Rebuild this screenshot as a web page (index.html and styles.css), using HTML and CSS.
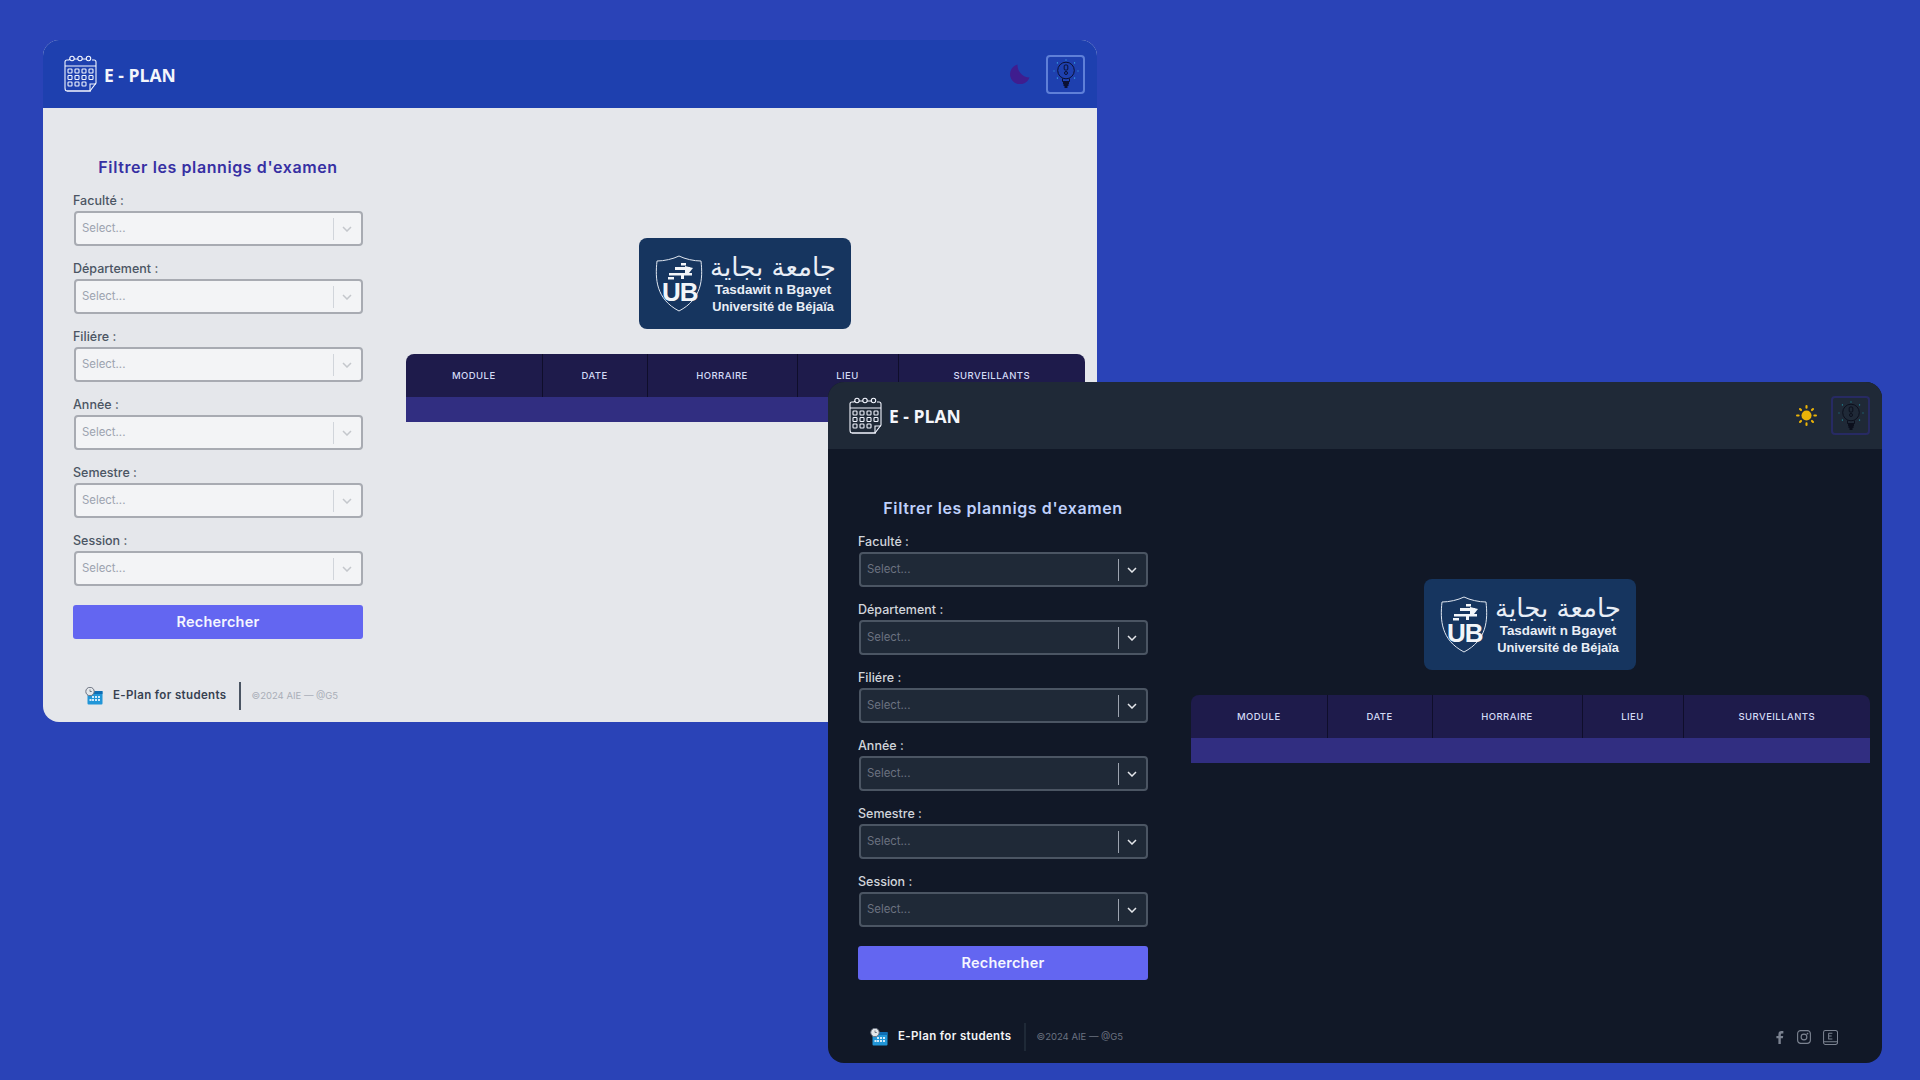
FILE: index.html
```html
<!DOCTYPE html>
<html lang="fr">
<head>
<meta charset="utf-8">
<title>E-Plan</title>
<link rel="stylesheet" href="styles.css">
</head>
<body>
<svg class="defs" aria-hidden="true">
  <symbol id="cal" viewBox="0 0 33 38">
    <g fill="none" stroke="currentColor" stroke-width="1.100">
      <path d="M5 5H3Q1 5 1 7V33M28 5h2q2 0 2 2v21l-6 8H3"/>
      <path d="M1 11H32M1 33q0 3 2 3h24M26 36v-7h6"/>
      <path d="M10 4h4M18 4h4.500M5 5l1-1"/>
      <circle cx="8" cy="3.500" r="2.200"/><circle cx="16" cy="3.500" r="2.200"/><circle cx="24.500" cy="3.500" r="2.200"/>
      <rect x="4" y="14" width="4" height="4" rx=".8"/><rect x="11" y="14" width="4" height="4" rx=".8"/><rect x="18" y="14" width="4" height="4" rx=".8"/><rect x="25" y="14" width="4" height="4" rx=".8"/>
      <rect x="4" y="20.500" width="4" height="4" rx=".8"/><rect x="11" y="20.500" width="4" height="4" rx=".8"/><rect x="18" y="20.500" width="4" height="4" rx=".8"/><rect x="25" y="20.500" width="4" height="4" rx=".8"/>
      <rect x="4" y="27" width="4" height="4" rx=".8"/><rect x="11" y="27" width="4" height="4" rx=".8"/><rect x="18" y="27" width="4" height="4" rx=".8"/>
    </g>
  </symbol>
  <symbol id="moon" viewBox="0 0 20 20">
    <path fill="currentColor" d="M7.500 .5A10 10 0 1 0 19.500 13.500 12.500 12.500 0 0 1 7.500 .5Z"/>
  </symbol>
  <symbol id="sun" viewBox="0 0 20 20">
    <circle cx="10" cy="10" r="4.800" fill="currentColor"/>
    <g stroke="currentColor" stroke-width="2" stroke-linecap="round">
      <path d="M10 1v1.500M10 17.500V19M1 10h1.500M17.500 10H19M3.800 3.800l1 1M15.200 15.200l1 1M3.800 16.200l1-1M15.200 4.800l1-1"/>
    </g>
  </symbol>
  <symbol id="bulb" viewBox="0 0 26 30">
    <g fill="none" stroke="currentColor" stroke-width="1">
      <circle cx="13" cy="11.500" r="8.300"/>
      <path d="M9.500 19.500v3h7v-3"/>
      <rect x="11.200" y="6" width="3.600" height="5" rx="1"/>
      <circle cx="13" cy="14" r="1.500"/>
    </g>
    <path stroke="currentColor" stroke-width="1.800" d="M10 24h6M10.500 26h5M11.500 28h3"/>
    <g class="ray" fill="none" stroke-width="1.200">
      <path d="M13 .5v1M4 3.500l.8.800M22 3.500l-.8.800M.5 12h1M24.500 12h1M4 19.500l.8-.8M22 19.500l-.8-.8"/>
    </g>
  </symbol>
  <symbol id="mini" viewBox="0 0 18 18">
    <rect x="2.500" y="4" width="15" height="13.500" rx="1" fill="#2196d8"/>
    <rect x="2.500" y="4" width="15" height="3" fill="#0f6db3"/>
    <g fill="#cfe9fa"><rect x="7" y="9" width="2" height="2"/><rect x="10" y="9" width="2" height="2"/><rect x="13" y="9" width="2" height="2"/><rect x="4.500" y="12" width="2" height="2"/><rect x="7" y="12" width="2" height="2"/><rect x="10" y="12" width="2" height="2"/><rect x="13" y="12" width="2" height="2"/></g>
    <circle cx="5" cy="4.500" r="4.200" fill="#e4e7ea" stroke="#6b7280"/>
    <path d="M5 2.500v2h1.800" fill="none" stroke="#4b5563" stroke-width=".7"/>
  </symbol>
  <symbol id="chev" viewBox="0 0 10 6">
    <path d="M1 1l4 4 4-4" fill="none" stroke="currentColor" stroke-width="1.500"/>
  </symbol>
  <symbol id="fb" viewBox="0 0 10 16">
    <path fill="currentColor" d="M3 16V9H.5V6H3V4q0-4 4-4h2.200v3H7.500Q6 3 6 4.500V6h3l-.5 3H6v7Z"/>
  </symbol>
  <symbol id="ig" viewBox="0 0 16 16">
    <g fill="none" stroke="currentColor" stroke-width="1.300"><rect x=".7" y=".7" width="14.600" height="14.600" rx="3.500"/><circle cx="8" cy="8" r="3.300"/></g>
    <circle cx="12" cy="4" r="1" fill="currentColor"/>
  </symbol>
  <symbol id="bk" viewBox="0 0 16 16">
    <g fill="none" stroke="currentColor" stroke-width="1.100"><path d="M2.500.6h11a2 2 0 0 1 2 2v10.500a2.200 2.200 0 0 1-2.200 2.300H2.700A2.200 2.200 0 0 1 .6 13V2.500A2 2 0 0 1 2.500.6Z"/><path d="M.8 12.500h14.500M6 3.500h4M6 3.500v6h4M6 6.500h3.300"/></g>
  </symbol>
  <symbol id="shield" viewBox="0 0 48 57">
    <path d="M24 1C18 4 9 6 2 6c-2 18-1 38 22 50C47 44 48 24 46 6c-7 0-16-2-22-5Z" fill="none" stroke="#dfe6f0" stroke-width="1"/>
    <g fill="#f2f5f9">
      <rect x="26" y="8" width="5" height="2.500"/><rect x="20" y="12" width="15" height="3"/><path d="M30 11l8 2-4 5h-4Z"/>
      <rect x="14" y="18" width="23" height="2.500"/><rect x="26" y="20" width="3" height="4"/><rect x="13" y="22" width="6" height="2.500"/>
    </g>
  </symbol>
</svg>

<section class="win win-light">
  <header class="bar">
    <div class="brand"><svg class="ico-cal"><use href="#cal"/></svg><span class="brand-name">E - PLAN</span></div>
    <div class="bar-tools">
      <svg class="ico-moon"><use href="#moon"/></svg>
      <span class="bulb-btn"><svg class="ico-bulb"><use href="#bulb"/></svg></span>
    </div>
  </header>
  <div class="main">
    <form class="filters">
      <h2 class="filters-title">Filtrer les plannigs d'examen</h2>
      <div class="fields">
        <div class="field"><span class="field-label">Faculté :</span><div class="select"><span class="ph">Select...</span><i class="sep"></i><svg class="chev"><use href="#chev"/></svg></div></div>
        <div class="field"><span class="field-label">Département :</span><div class="select"><span class="ph">Select...</span><i class="sep"></i><svg class="chev"><use href="#chev"/></svg></div></div>
        <div class="field"><span class="field-label">Filiére :</span><div class="select"><span class="ph">Select...</span><i class="sep"></i><svg class="chev"><use href="#chev"/></svg></div></div>
        <div class="field"><span class="field-label">Année :</span><div class="select"><span class="ph">Select...</span><i class="sep"></i><svg class="chev"><use href="#chev"/></svg></div></div>
        <div class="field"><span class="field-label">Semestre :</span><div class="select"><span class="ph">Select...</span><i class="sep"></i><svg class="chev"><use href="#chev"/></svg></div></div>
        <div class="field"><span class="field-label">Session :</span><div class="select"><span class="ph">Select...</span><i class="sep"></i><svg class="chev"><use href="#chev"/></svg></div></div>
      </div>
      <button class="search" type="button">Rechercher</button>
    </form>
    <div class="results">
      <div class="logo">
        <div class="shield"><svg class="shield-svg"><use href="#shield"/></svg><span class="shield-ub">UB</span></div>
        <div class="logo-text"><span class="logo-ar" dir="rtl" lang="ar">جامعة بجاية</span><span class="logo-l1">Tasdawit n Bgayet</span><span class="logo-l2">Université de Béjaïa</span></div>
      </div>
      <table class="plan">
        <colgroup><col class="c1"><col class="c2"><col class="c3"><col class="c4"><col class="c5"></colgroup>
        <thead><tr><th>MODULE</th><th>DATE</th><th>HORRAIRE</th><th>LIEU</th><th>SURVEILLANTS</th></tr></thead>
        <tbody><tr><td colspan="5"></td></tr></tbody>
      </table>
    </div>
  </div>
  <footer class="foot">
    <div class="foot-left">
      <svg class="ico-mini"><use href="#mini"/></svg>
      <span class="foot-name">E-Plan for students</span>
      <i class="foot-div"></i>
      <span class="foot-copy">©2024 AIE — @G5</span>
    </div>
    <div class="socials"><svg class="s-fb"><use href="#fb"/></svg><svg class="s-ig"><use href="#ig"/></svg><svg class="s-bk"><use href="#bk"/></svg></div>
  </footer>
</section>

<section class="win win-dark">
  <header class="bar">
    <div class="brand"><svg class="ico-cal"><use href="#cal"/></svg><span class="brand-name">E - PLAN</span></div>
    <div class="bar-tools">
      <svg class="ico-sun"><use href="#sun"/></svg>
      <span class="bulb-btn"><svg class="ico-bulb"><use href="#bulb"/></svg></span>
    </div>
  </header>
  <div class="main">
    <form class="filters">
      <h2 class="filters-title">Filtrer les plannigs d'examen</h2>
      <div class="fields">
        <div class="field"><span class="field-label">Faculté :</span><div class="select"><span class="ph">Select...</span><i class="sep"></i><svg class="chev"><use href="#chev"/></svg></div></div>
        <div class="field"><span class="field-label">Département :</span><div class="select"><span class="ph">Select...</span><i class="sep"></i><svg class="chev"><use href="#chev"/></svg></div></div>
        <div class="field"><span class="field-label">Filiére :</span><div class="select"><span class="ph">Select...</span><i class="sep"></i><svg class="chev"><use href="#chev"/></svg></div></div>
        <div class="field"><span class="field-label">Année :</span><div class="select"><span class="ph">Select...</span><i class="sep"></i><svg class="chev"><use href="#chev"/></svg></div></div>
        <div class="field"><span class="field-label">Semestre :</span><div class="select"><span class="ph">Select...</span><i class="sep"></i><svg class="chev"><use href="#chev"/></svg></div></div>
        <div class="field"><span class="field-label">Session :</span><div class="select"><span class="ph">Select...</span><i class="sep"></i><svg class="chev"><use href="#chev"/></svg></div></div>
      </div>
      <button class="search" type="button">Rechercher</button>
    </form>
    <div class="results">
      <div class="logo">
        <div class="shield"><svg class="shield-svg"><use href="#shield"/></svg><span class="shield-ub">UB</span></div>
        <div class="logo-text"><span class="logo-ar" dir="rtl" lang="ar">جامعة بجاية</span><span class="logo-l1">Tasdawit n Bgayet</span><span class="logo-l2">Université de Béjaïa</span></div>
      </div>
      <table class="plan">
        <colgroup><col class="c1"><col class="c2"><col class="c3"><col class="c4"><col class="c5"></colgroup>
        <thead><tr><th>MODULE</th><th>DATE</th><th>HORRAIRE</th><th>LIEU</th><th>SURVEILLANTS</th></tr></thead>
        <tbody><tr><td colspan="5"></td></tr></tbody>
      </table>
    </div>
  </div>
  <footer class="foot">
    <div class="foot-left">
      <svg class="ico-mini"><use href="#mini"/></svg>
      <span class="foot-name">E-Plan for students</span>
      <i class="foot-div"></i>
      <span class="foot-copy">©2024 AIE — @G5</span>
    </div>
    <div class="socials"><svg class="s-fb"><use href="#fb"/></svg><svg class="s-ig"><use href="#ig"/></svg><svg class="s-bk"><use href="#bk"/></svg></div>
  </footer>
</section>
</body>
</html>
```

FILE: styles.css
```css
* { box-sizing: border-box; }
html, body { margin: 0; height: 100%; }
body {
  position: relative;
  width: 1920px;
  height: 1080px;
  overflow: hidden;
  background: #2a43b7;
  font-family: Inter, "Liberation Sans", sans-serif;
}
.defs { position: absolute; width: 0; height: 0; }

/* Windows float on a free canvas */
.win {
  position: absolute;
  width: 1054px;
  display: flex;
  flex-direction: column;
  border-radius: 16px;
  overflow: hidden;
}
.win-light {
  left: 43px; top: 40px; height: 682px;
  --bar-h: 68px;
  --body: #e5e7eb; --bar: #1e40af; --title: #3730a3; --label: #4b5563;
  --sel: #f3f4f6; --sel-bd: #a8abb2; --ph: #9ca3af; --sep: #d1d5db; --chev: #c4c7cc;
  --name: #374151; --div: #4b5563; --copy: #a9aeb8; --moon: #3f1d8f;
  --bulb-bd: #5f80d8; --bulb: #0b1033; --ray: #38a9e8; --social: #6b7280;
}
.win-dark {
  left: 828px; top: 382px; height: 681px;
  --bar-h: 67px;
  --body: #111827; --bar: #1f2937; --title: #bfd0fb; --label: #d1d5db;
  --sel: #1f2937; --sel-bd: #4b5563; --ph: #6b7280; --sep: #9ca3af; --chev: #e5e7eb;
  --name: #f3f4f6; --div: #1f2937; --copy: #6b7280; --moon: #eab308;
  --bulb-bd: #272a63; --bulb: #0b0f1c; --ray: #1f8a98; --social: #7b8290;
}
.win { background: var(--body); }

/* Top bar */
.bar {
  flex: none;
  height: var(--bar-h);
  background: var(--bar);
  display: flex;
  align-items: center;
  justify-content: space-between;
  padding: 0 12px 0 21px;
}
.brand { display: flex; align-items: center; gap: 7px; color: #f3f6ff; }
.ico-cal { width: 33px; height: 38px; }
.brand-name { font: 700 17.500px/20px "Open Sans", sans-serif; padding-top: 1px; color: #f4f6fb; }
.bar-tools { display: flex; align-items: center; gap: 16px; }
.ico-moon { width: 20px; height: 20px; color: var(--moon); }
.ico-sun { width: 21px; height: 21px; color: var(--moon); margin-right: -2px; }
.bulb-btn {
  width: 39px; height: 39px;
  border: 2px solid var(--bulb-bd);
  border-radius: 4px;
  display: flex; align-items: center; justify-content: center;
}
.ico-bulb { width: 26px; height: 30px; color: var(--bulb); }
.ray { stroke: var(--ray); }

/* Main area */
.main { flex: 1; display: flex; min-height: 0; padding: 0 12px 0 30px; gap: 43px; }
.filters { flex: none; width: 290px; padding-top: 48px; }
.filters-title {
  margin: 0 0 13px;
  font: 600 16px/23px Inter, sans-serif;
  padding-bottom: 1px;
  letter-spacing: .6px;
  color: var(--title);
  text-align: center;
}
.fields { display: flex; flex-direction: column; gap: 15px; }
.field { display: flex; flex-direction: column; gap: 2px; }
.field-label { font: 500 12.500px/16px Inter, sans-serif; color: var(--label); }
.select {
  height: 35px;
  margin: 0 0 0 1px;
  display: flex;
  align-items: center;
  background: var(--sel);
  border: 2px solid var(--sel-bd);
  border-radius: 4px;
  padding-left: 6px;
}
.ph { flex: 1; font: 400 11.400px/1 Inter, sans-serif; color: var(--ph); }
.sep { width: 1px; height: 22px; background: var(--sep); }
.chev { width: 10px; height: 6px; margin: 0 9px 0 8px; color: var(--chev); }
.search {
  display: block;
  width: 100%;
  height: 34px;
  margin-top: 19px;
  border: 0;
  border-radius: 3px;
  background: #6366f1;
  color: #f5f6ff;
  font: 600 14.500px/1 Inter, sans-serif;
  letter-spacing: .2px;
}

/* Results */
.results { flex: 1; min-width: 0; padding-top: 130px; display: flex; flex-direction: column; align-items: center; }
.logo {
  width: 212px; height: 91px;
  margin: 0 1px 25px 0;
  background: #16355f;
  border-radius: 8px;
  display: flex;
  align-items: center;
  padding-left: 16px;
  gap: 8px;
  color: #e9eef6;
}
.shield { position: relative; width: 48px; height: 57px; flex: none; }
.shield-svg { width: 48px; height: 57px; display: block; }
.shield-ub {
  position: absolute; left: 7px; top: 24px;
  font: 700 26px/26px "Liberation Sans", sans-serif;
  color: #f2f5f9;
  letter-spacing: -1px;
}
.logo-text { display: flex; flex-direction: column; align-items: center; width: 124px; }
.logo-ar { font: 400 26px/28px "DejaVu Sans", sans-serif; margin-bottom: 1px; white-space: nowrap; }
.logo-l1 { font: 700 13.400px/16px "Liberation Sans", sans-serif; white-space: nowrap; }
.logo-l2 { font: 700 12.800px/17px "Liberation Sans", sans-serif; white-space: nowrap; }

.plan { width: 679px; border-collapse: collapse; table-layout: fixed; flex: none; }
.c1 { width: 136px; } .c2 { width: 105px; } .c3 { width: 150px; } .c4 { width: 101px; } .c5 { width: 187px; }
.plan thead tr { background: #1e1b4b; }
.plan th {
  height: 43px;
  padding: 0;
  font: 500 9.500px/1 Inter, sans-serif;
  letter-spacing: .45px;
  color: #d3daf5;
  border-right: 1px solid #0f0e2b;
}
.plan th:last-child { border-right: 0; }
.plan th:first-child { border-top-left-radius: 8px; }
.plan th:last-child { border-top-right-radius: 8px; }
.plan td { height: 25px; padding: 0; background: #312e81; }

/* Footer */
.foot {
  flex: none;
  height: 28px;
  margin-bottom: 12px;
  padding: 0 44px 0 42px;
  display: flex;
  align-items: center;
  justify-content: space-between;
}
.foot-left { display: flex; align-items: center; }
.ico-mini { width: 18px; height: 18px; margin-right: 10px; }
.foot-name { font: 600 11.500px/1 Inter, sans-serif; letter-spacing: .36px; color: var(--name); }
.foot-div { width: 2px; height: 28px; margin: 0 11px 0 12px; background: var(--div); }
.foot-copy { font: 400 9.500px/1 Inter, sans-serif; color: var(--copy); }
.socials { display: flex; align-items: center; gap: 13px; color: var(--social); }
.s-fb { width: 8px; height: 13px; }
.s-ig { width: 14px; height: 14px; }
.s-bk { width: 15px; height: 15px; margin-left: -1px; }
```
